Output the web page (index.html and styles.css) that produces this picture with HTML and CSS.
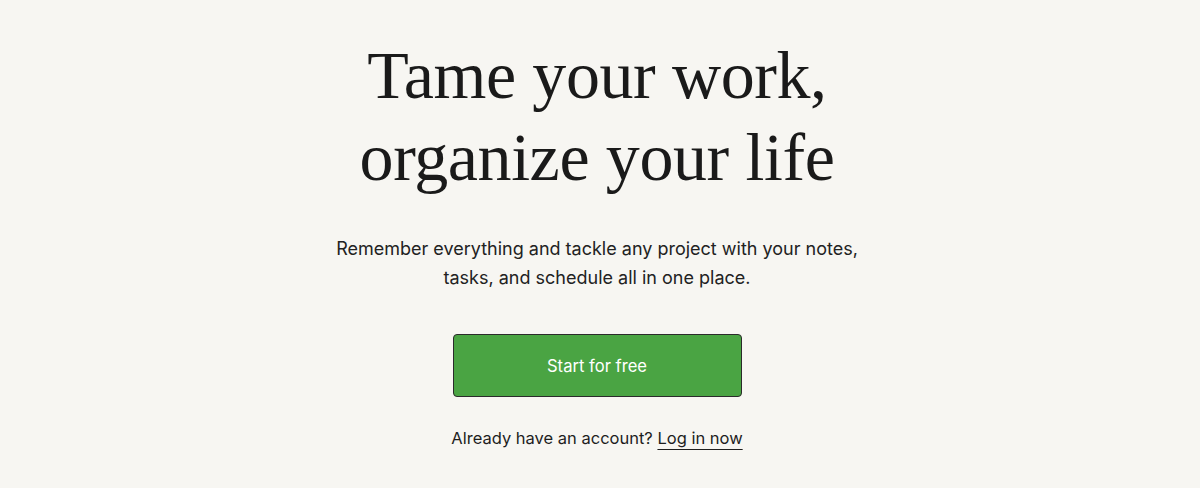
FILE: index.html
```html
<!DOCTYPE html>
<html lang="en">
<head>
<meta charset="utf-8">
<title>Tame your work, organize your life</title>
<link rel="stylesheet" href="styles.css">
</head>
<body>
<main class="hero">
  <h1 class="hero-title">Tame your work,<br>organize your life</h1>
  <p class="hero-text">Remember everything and tackle any project with your notes,<br>tasks, and schedule all in one place.</p>
  <a class="cta" href="#">Start for free</a>
  <p class="login">Already have an account? <a class="login-link" href="#">Log in now</a></p>
</main>
</body>
</html>
```

FILE: styles.css
```css
html, body {
  margin: 0;
  padding: 0;
  background: #f7f6f2;
  color: #1e1e1e;
}
body {
  font-family: Inter, "Noto Sans", sans-serif;
  width: 1200px;
  height: 488px;
  overflow: hidden;
}
.hero {
  display: flex;
  flex-direction: column;
  align-items: center;
  text-align: center;
  padding: 34px 6px 0 0;
}
.hero-title {
  margin: 0;
  font-family: "Liberation Serif", "Times New Roman", serif;
  font-weight: 400;
  font-size: 68px;
  line-height: 82px;
  letter-spacing: -0.4px;
  color: #1a1a1a;
}
.hero-text {
  margin: 36px 0 0;
  font-size: 18px;
  line-height: 29px;
  color: #222;
}
.cta {
  margin-top: 42px;
  box-sizing: border-box;
  width: 289px;
  height: 63px;
  display: flex;
  align-items: center;
  justify-content: center;
  background: #4aa443;
  border: 1px solid #2b2b2b;
  border-radius: 4px;
  color: #fff;
  font-size: 16.6px;
  text-decoration: none;
}
.login {
  margin: 31px 0 0;
  font-size: 16.5px;
  line-height: 20px;
  color: #1e1e1e;
}
.login-link {
  color: #1e1e1e;
  text-decoration: underline;
  text-underline-offset: 5px;
  text-decoration-thickness: 1px;
}
```
